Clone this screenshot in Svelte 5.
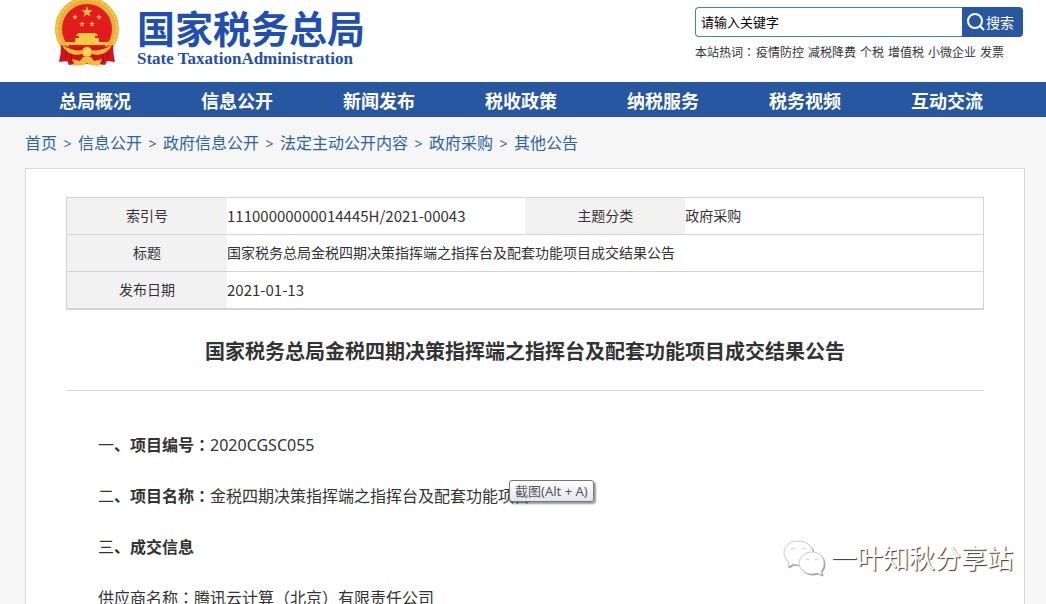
<script lang="ts">
	const navItems = ['总局概况', '信息公开', '新闻发布', '税收政策', '纳税服务', '税务视频', '互动交流'];
	const hotWords = ['疫情防控', '减税降费', '个税', '增值税', '小微企业', '发票'];
	const crumbs = ['首页', '信息公开', '政府信息公开', '法定主动公开内容', '政府采购', '其他公告'];

	const title = '国家税务总局金税四期决策指挥端之指挥台及配套功能项目成交结果公告';

	let keyword = $state('请输入关键字');
</script>

{#snippet star(x: number, y: number, r: number)}
	<path
		transform="translate({x} {y}) scale({r})"
		d="M0-1 .24-.31H.95L.38.12.59.81 0 .39-.59.81-.38.12-.95-.31H-.24Z"
		fill="#f7c244"
	/>
{/snippet}

<div class="page">
	<header class="header">
		<a class="brand" href="#home">
			<svg class="emblem" viewBox="0 0 64 67" aria-hidden="true">
				<circle cx="32" cy="29" r="28.5" fill="#e21c1e" stroke="#e9b13a" stroke-width="7" />
				<circle cx="32" cy="29" r="30" fill="none" stroke="#f3c852" stroke-width="2" stroke-dasharray="4 1" />
				{@render star(32, 12, 6)}
				{@render star(20, 17, 3)}
				{@render star(44, 17, 3)}
				{@render star(27, 24, 3)}
				{@render star(37, 24, 3)}
				<path d="M23 33h18l2 3H21ZM24 36h16v3H24ZM20 38h24v4h9v3H11v-3h9Z" fill="#f8ca46" />
				<path d="M6 45q0 9-2 17l8-1 2 4 8-1h20l8 1 2-4 8 1q-2-8-2-17l-9 2H15Z" fill="#d3131b" />
				<path d="M11 49v9M16 54v8M53 49v9M48 54v8" stroke="#9f0c13" />
				<path d="M7 45q12 7 21 5l4-2 4 2q9 2 21-5-4 9-15 10l-10-2-10 2Q11 54 7 45Z" fill="#edb93d" />
				<circle cx="32" cy="52" r="5" fill="#f8d45b" stroke="#d99a2b" />
				<path d="m17 59 8 2 3-4h8l3 4 8-2-3 7-9-1-3-2-3 2-9 1Z" fill="#f2bd3c" />
			</svg>
			<span class="brand-text">
				<span class="brand-name">国家税务总局</span>
				<span class="brand-en">State TaxationAdministration</span>
			</span>
		</a>

		<div class="search">
			<form class="search-form" onsubmit={(e) => e.preventDefault()}>
				<input type="text" aria-label="关键字" bind:value={keyword} />
				<button type="submit">
					<svg viewBox="0 0 18 18" aria-hidden="true">
						<circle cx="8" cy="8" r="7" />
						<path d="m13 13 4 4" />
					</svg>
					搜索
				</button>
			</form>
			<div class="hot">
				<span>本站热词<span class="mid">：</span></span>
				{#each hotWords as word}
					<a href="#hot">{word}</a>
				{/each}
			</div>
		</div>
	</header>

	<nav class="nav">
		{#each navItems as item}
			<a href="#nav">{item}</a>
		{/each}
	</nav>

	<main class="main">
		<ol class="crumbs">
			{#each crumbs as crumb}
				<li><a href="#crumb">{crumb}</a></li>
			{/each}
		</ol>

		<article class="card">
			<table class="meta">
				<tbody>
					<tr>
						<th scope="row">索引号</th>
						<td class="num">11100000000014445H/2021-00043</td>
						<th scope="row">主题分类</th>
						<td>政府采购</td>
					</tr>
					<tr>
						<th scope="row">标题</th>
						<td colspan="3">{title}</td>
					</tr>
					<tr>
						<th scope="row">发布日期</th>
						<td class="num" colspan="3">2021-01-13</td>
					</tr>
				</tbody>
			</table>

			<h1>{title}</h1>

			<div class="content">
				<p>一<strong>、项目编号<span class="mid">：</span></strong>2020CGSC055</p>
				<p>
					二<strong>、项目名称<span class="mid">：</span></strong>金税四期决策指挥端之指挥台及配套功能项目
					<span class="tooltip" role="tooltip">截图(Alt + A)</span>
				</p>
				<p>三<strong>、成交信息</strong></p>
				<p>供应商名称<span class="mid">：</span>腾讯云计算<span class="mid">（</span>北京<span class="mid">）</span>有限责任公司</p>
			</div>
		</article>
	</main>

	<div class="watermark">
		<svg viewBox="0 0 42 36" aria-hidden="true">
			<path d="M15 1C7 1 1 6 1 13c0 4 2 7 5 9l-1 5 5-3 6 1c8 0 14-5 14-12S23 1 15 1Z" />
			<path d="M29 12c-7 0-13 5-13 11s6 11 13 11l5-1 5 2-1-4c2-2 3-5 3-8 0-6-5-11-12-11Z" />
			<path d="M8 9q2-2 4 0M19 9q2-2 4 0M23 20q2-2 3 0M32 20q2-2 3 0" />
		</svg>
		<span>一叶知秋分享站</span>
	</div>
</div>

<style>
	:global(body) {
		margin: 0;
		background: #f6f6f6;
	}

	.page {
		position: relative;
		height: 100vh;
		overflow: hidden;
		font-family: 'Noto Sans', 'Noto Sans CJK SC', sans-serif;
		font-size: 16px;
		color: #333;
	}

	a {
		color: inherit;
		text-decoration: none;
	}

	/* full-width punctuation centred in its cell */
	.mid {
		font-family: 'Noto Sans CJK TC', sans-serif;
		line-height: 1;
	}

	.header {
		display: flex;
		justify-content: space-between;
		height: 82px;
		padding: 0 23px 0 55px;
		background: #fff;
	}

	.brand {
		display: flex;
		gap: 18px;
		color: #1f4fb0;
	}

	.emblem {
		width: 64px;
		height: 67px;
	}

	.brand-text {
		display: flex;
		flex-direction: column;
		padding-top: 8px;
	}

	.brand-name {
		font-size: 38px;
		font-weight: 700;
		line-height: 40px;
	}

	.brand-en {
		font: 700 17px/22px 'Liberation Serif', serif;
	}

	.search {
		width: 328px;
		padding-top: 7px;
	}

	.search-form {
		display: flex;
		height: 30px;
	}

	.search-form input {
		flex: 1;
		min-width: 0;
		box-sizing: border-box;
		padding: 0 5px 2px;
		border: 1px solid #3f83bf;
		border-right: 0;
		border-radius: 4px 0 0 4px;
		background: #fff;
		color: #000;
		font: 13px 'Noto Sans CJK SC', sans-serif;
		outline: none;
	}

	.search-form button {
		display: flex;
		align-items: center;
		gap: 1px;
		width: 61px;
		padding: 0 5px;
		border: 0;
		border-radius: 0 4px 4px 0;
		background: #2857a2;
		color: #fff;
		font: 14px 'Noto Sans CJK SC', sans-serif;
		white-space: nowrap;
	}

	.search-form svg {
		flex: none;
		width: 18px;
		height: 18px;
		fill: none;
		stroke: #fff;
		stroke-width: 2;
	}

	.hot {
		display: flex;
		gap: 4px;
		padding-top: 7px;
		font-size: 12px;
		line-height: 18px;
		white-space: nowrap;
	}

	.hot > span {
		margin-right: -3px;
	}

	.nav {
		display: grid;
		grid-template-columns: repeat(7, 1fr);
		padding: 3px 28px 0 24px;
		background: #2857a2;
		color: #fff;
		font-size: 18px;
		font-weight: 700;
		line-height: 32px;
		text-align: center;
	}

	.main {
		padding: 0 21px 0 25px;
	}

	.crumbs {
		display: flex;
		margin: 0;
		padding: 2px 0 0;
		list-style: none;
		color: #2b63a8;
		line-height: 49px;
	}

	.crumbs li {
		display: flex;
	}

	.crumbs li + li::before {
		content: '>';
		width: 21px;
		font-size: 14px;
		text-align: center;
	}

	.card {
		padding: 28px 40px;
		border: 1px solid #d9d9d9;
		background: #fff;
	}

	.meta {
		width: 100%;
		border: 1px solid #d3d3d3;
		border-bottom-width: 2px;
		border-collapse: collapse;
		table-layout: fixed;
		font-size: 14px;
		line-height: 20px;
	}

	.meta tr + tr {
		border-top: 1px solid #d3d3d3;
	}

	.meta th,
	.meta td {
		padding: 8px 0;
		text-align: left;
	}

	.meta th {
		width: 160px;
		background: #f2f2f2;
		font-weight: 400;
		text-align: center;
	}

	.meta .num {
		font-family: 'Noto Sans CJK SC', sans-serif;
		font-size: 15px;
	}

	h1 {
		margin: 27px 0 29px;
		padding-bottom: 23px;
		border-bottom: 1px solid #d9d9d9;
		font-size: 20px;
		line-height: 30px;
		text-align: center;
	}

	.content p {
		position: relative;
		margin: 0;
		padding-left: 32px;
		line-height: 51px;
	}

	.tooltip {
		position: absolute;
		top: 9px;
		left: 443px;
		padding: 0 5px;
		border: 1px solid #767676;
		border-radius: 3px;
		background: linear-gradient(#fff, #e4e5f0);
		box-shadow: 2px 2px 2px rgba(0, 0, 0, 0.4);
		color: #575757;
		font-size: 13px;
		line-height: 20px;
		white-space: nowrap;
	}

	.watermark {
		position: absolute;
		right: 33px;
		bottom: 26px;
		display: flex;
		align-items: center;
		gap: 6px;
		color: #fff;
		font-size: 26px;
		line-height: 40px;
		text-shadow: 1px 1px 1px #333;
	}

	.watermark svg {
		width: 42px;
		height: 36px;
		fill: #fff;
		stroke: #ccc;
		filter: drop-shadow(1px 1px 0 #999);
	}
</style>
